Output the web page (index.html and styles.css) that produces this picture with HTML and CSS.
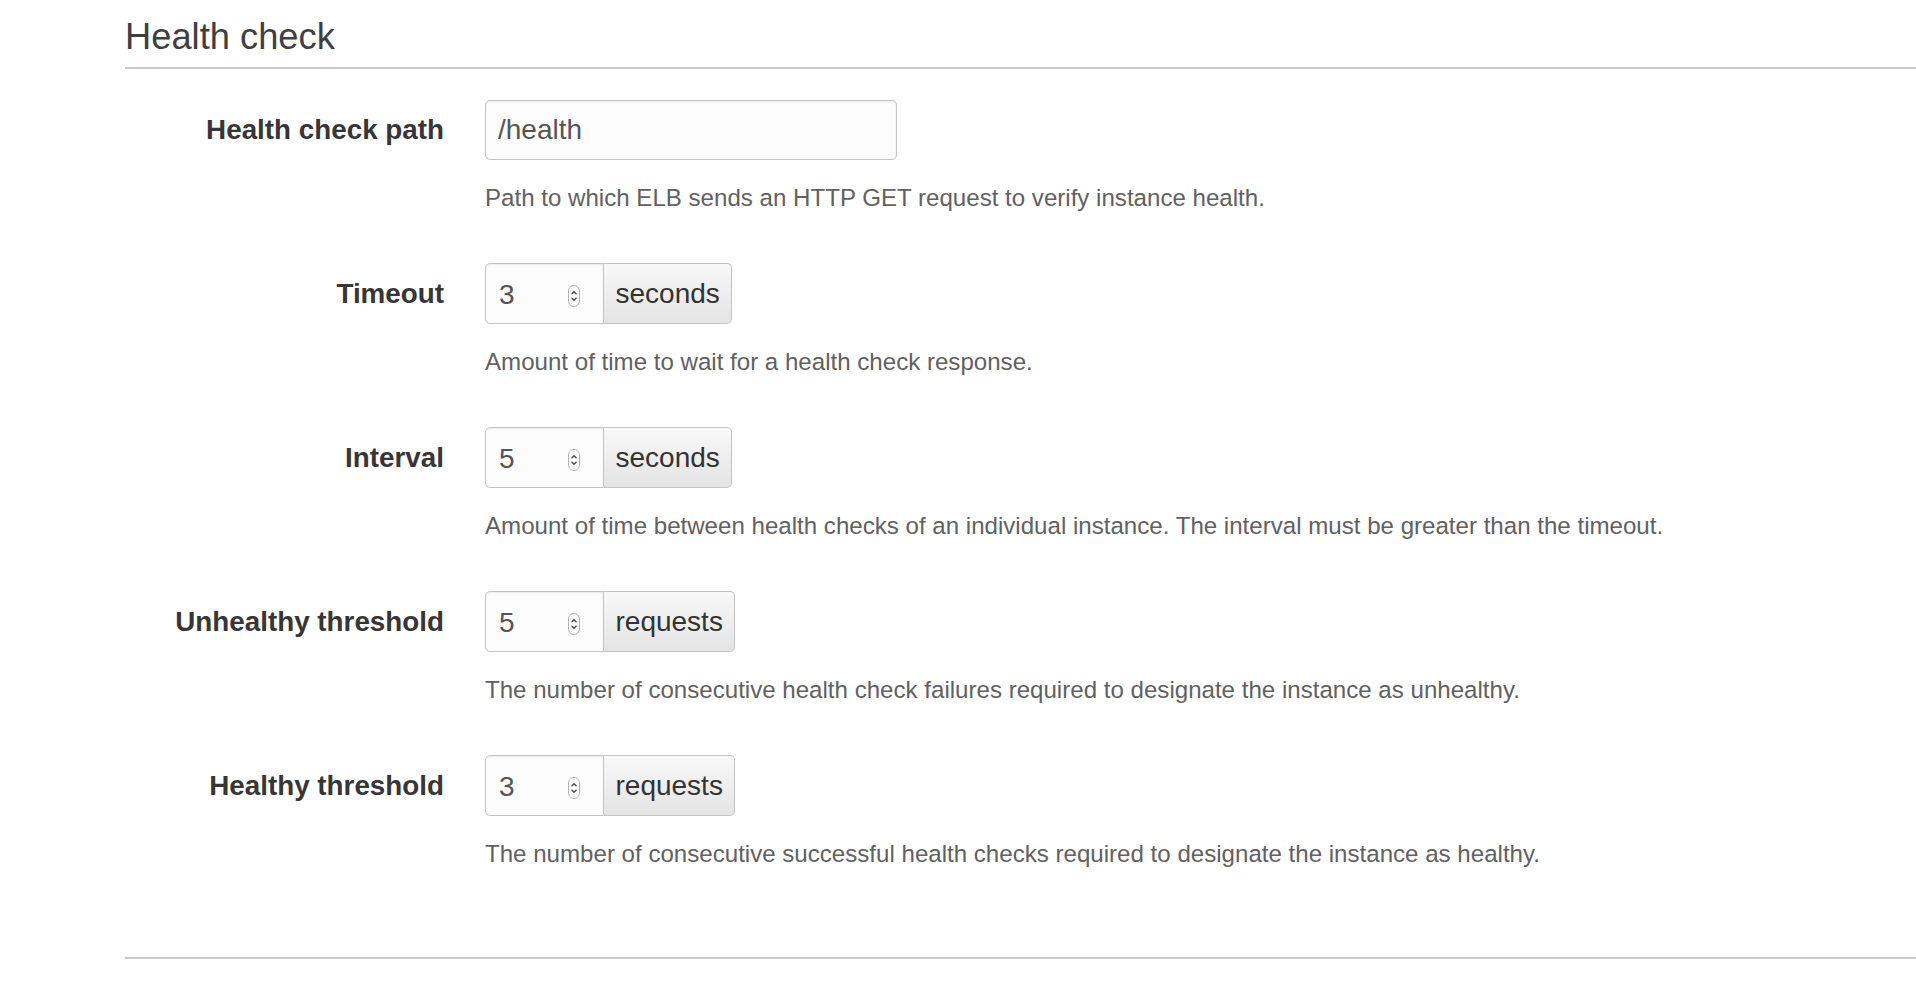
FILE: index.html
```html
<!DOCTYPE html>
<html lang="en">
<head>
<meta charset="utf-8">
<title>Health check</title>
<link rel="stylesheet" href="styles.css">
</head>
<body>
<section class="section">
  <h2 class="section-title">Health check</h2>
  <div class="form">
    <div class="row">
      <div class="label">Health check path</div>
      <div class="control">
        <div class="text-input">/health</div>
      </div>
      <div class="help">Path to which ELB sends an HTTP GET request to verify instance health.</div>
    </div>

    <div class="row">
      <div class="label">Timeout</div>
      <div class="control">
        <div class="input-group">
          <div class="num-input"><span class="num-value">3</span>
            <svg class="spinner" width="12" height="22" viewBox="0 0 12 22"><rect x="0.5" y="0.5" width="11" height="21" rx="5.5" fill="#fff" stroke="#b5b5b5"/><path d="M3.5 9.2 L6 6.7 L8.5 9.2" fill="none" stroke="#444" stroke-width="1.3"/><path d="M3.5 12.8 L6 15.3 L8.5 12.8" fill="none" stroke="#444" stroke-width="1.3"/></svg>
          </div>
          <div class="addon">seconds</div>
        </div>
      </div>
      <div class="help">Amount of time to wait for a health check response.</div>
    </div>

    <div class="row">
      <div class="label">Interval</div>
      <div class="control">
        <div class="input-group">
          <div class="num-input"><span class="num-value">5</span>
            <svg class="spinner" width="12" height="22" viewBox="0 0 12 22"><rect x="0.5" y="0.5" width="11" height="21" rx="5.5" fill="#fff" stroke="#b5b5b5"/><path d="M3.5 9.2 L6 6.7 L8.5 9.2" fill="none" stroke="#444" stroke-width="1.3"/><path d="M3.5 12.8 L6 15.3 L8.5 12.8" fill="none" stroke="#444" stroke-width="1.3"/></svg>
          </div>
          <div class="addon">seconds</div>
        </div>
      </div>
      <div class="help">Amount of time between health checks of an individual instance. The interval must be greater than the timeout.</div>
    </div>

    <div class="row">
      <div class="label">Unhealthy threshold</div>
      <div class="control">
        <div class="input-group">
          <div class="num-input"><span class="num-value">5</span>
            <svg class="spinner" width="12" height="22" viewBox="0 0 12 22"><rect x="0.5" y="0.5" width="11" height="21" rx="5.5" fill="#fff" stroke="#b5b5b5"/><path d="M3.5 9.2 L6 6.7 L8.5 9.2" fill="none" stroke="#444" stroke-width="1.3"/><path d="M3.5 12.8 L6 15.3 L8.5 12.8" fill="none" stroke="#444" stroke-width="1.3"/></svg>
          </div>
          <div class="addon">requests</div>
        </div>
      </div>
      <div class="help">The number of consecutive health check failures required to designate the instance as unhealthy.</div>
    </div>

    <div class="row">
      <div class="label">Healthy threshold</div>
      <div class="control">
        <div class="input-group">
          <div class="num-input"><span class="num-value">3</span>
            <svg class="spinner" width="12" height="22" viewBox="0 0 12 22"><rect x="0.5" y="0.5" width="11" height="21" rx="5.5" fill="#fff" stroke="#b5b5b5"/><path d="M3.5 9.2 L6 6.7 L8.5 9.2" fill="none" stroke="#444" stroke-width="1.3"/><path d="M3.5 12.8 L6 15.3 L8.5 12.8" fill="none" stroke="#444" stroke-width="1.3"/></svg>
          </div>
          <div class="addon">requests</div>
        </div>
      </div>
      <div class="help">The number of consecutive successful health checks required to designate the instance as healthy.</div>
    </div>
  </div>
</section>
</body>
</html>
```
FILE: styles.css
```css
html, body {
  margin: 0;
  padding: 0;
  background: #fff;
}

body {
  font-family: "Liberation Sans", Arial, Helvetica, sans-serif;
  color: #444;
}

.section {
  margin-left: 125px;
}

.section-title {
  margin: 0;
  padding: 17px 0 10px;
  font-size: 36.3px;
  line-height: 40px;
  font-weight: normal;
  color: #3f3f3f;
  border-bottom: 2px solid #cacaca;
}

.form {
  padding: 31px 0 38px;
  border-bottom: 2px solid #cacaca;
}

.row {
  display: grid;
  grid-template-columns: 319px 1fr;
  column-gap: 41px;
  margin-bottom: 48px;
}

.label {
  grid-column: 1;
  grid-row: 1;
  align-self: center;
  text-align: right;
  font-size: 27.8px;
  font-weight: bold;
  color: #363636;
  line-height: 34px;
}

.control {
  grid-column: 2;
  grid-row: 1;
  display: flex;
}

.help {
  grid-column: 2;
  grid-row: 2;
  margin-top: 21px;
  font-size: 24.1px;
  line-height: 34px;
  color: #616161;
}

.text-input {
  box-sizing: border-box;
  width: 412px;
  height: 60px;
  padding: 0 12px;
  display: flex;
  align-items: center;
  font-size: 28px;
  color: #555;
  background: #fcfcfc;
  border: 1px solid #c4c4c4;
  border-radius: 5px;
  box-shadow: inset 0 1px 2px rgba(0, 0, 0, 0.08);
}

.input-group {
  display: flex;
  height: 61px;
}

.num-input {
  box-sizing: border-box;
  width: 119px;
  height: 100%;
  padding: 0 0 0 13px;
  display: flex;
  align-items: center;
  font-size: 28px;
  color: #555;
  background: #fcfcfc;
  border: 1px solid #c4c4c4;
  border-radius: 5px 0 0 5px;
  box-shadow: inset 0 1px 2px rgba(0, 0, 0, 0.07);
}

.num-value {
  margin-top: 2px;
}

.spinner {
  display: block;
  margin-left: auto;
  margin-right: 23px;
  margin-top: 4px;
}

.addon {
  box-sizing: border-box;
  height: 100%;
  padding: 0 11.5px;
  display: flex;
  align-items: center;
  font-size: 28px;
  color: #333;
  background: linear-gradient(#f8f8f8, #e4e4e4);
  border: 1px solid #c4c4c4;
  border-left: 0;
  border-radius: 0 5px 5px 0;
}
```
